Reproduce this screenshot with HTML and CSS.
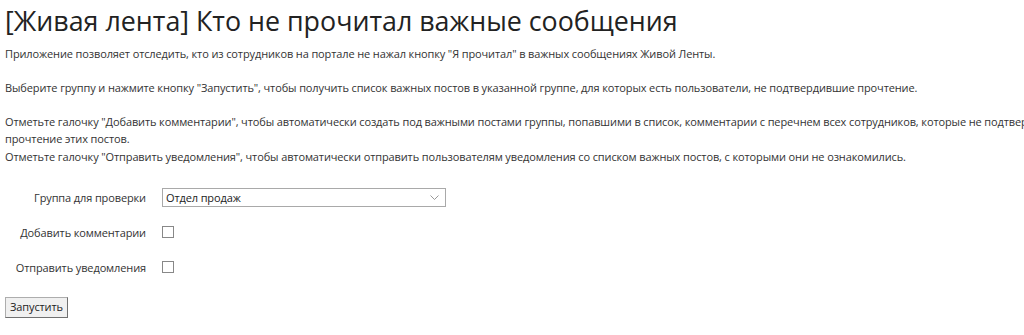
FILE: index.html
```html
<!DOCTYPE html>
<html lang="ru">
<head>
    <meta charset="UTF-8">
    <title>Кто не прочитал важные сообщения</title>
    <link rel="stylesheet" href="styles.css">
</head>
<body>
    <div class="page">
        <h1 class="title">[Живая лента] Кто не прочитал важные сообщения</h1>
        <p class="intro">
            Приложение позволяет отследить, кто из сотрудников на портале не нажал кнопку "Я прочитал" в важных сообщениях Живой Ленты.<br><br>
            Выберите группу и нажмите кнопку "Запустить", чтобы получить список важных постов в указанной группе, для которых есть пользователи, не подтвердившие прочтение.<br><br>
            Отметьте галочку "Добавить комментарии", чтобы автоматически создать под важными постами группы, попавшими в список, комментарии с перечнем всех сотрудников, которые не подтвердили прочтение этих постов.<br>
            Отметьте галочку "Отправить уведомления", чтобы автоматически отправить пользователям уведомления со списком важных постов, с которыми они не ознакомились.
        </p>

        <form class="check-form">
            <div class="form-row">
                <label class="form-label" for="group">Группа для проверки</label>
                <div class="select-box" id="group">
                    <span>Отдел продаж</span>
                    <svg width="9" height="5" viewBox="0 0 9 5"><path d="M0.5 0.5 L4.5 4.5 L8.5 0.5" fill="none" stroke="#999" stroke-width="1"/></svg>
                </div>
            </div>
            <div class="form-row">
                <label class="form-label" for="comments">Добавить комментарии</label>
                <span class="check" id="comments"></span>
            </div>
            <div class="form-row">
                <label class="form-label" for="notify">Отправить уведомления</label>
                <span class="check" id="notify"></span>
            </div>
            <button type="button" class="run-button">Запустить</button>
        </form>
    </div>
</body>
</html>
```

FILE: styles.css
```css
html, body {
    margin: 0;
    padding: 0;
    overflow: hidden;
    background-color: #fff;
}

body {
    font-family: "Open Sans", "Noto Sans", sans-serif;
    color: #333;
}

.page {
    width: 1085px;
    padding: 0 5px;
}

.title {
    font-weight: 400;
    font-size: 26.8px;
    line-height: 38px;
    color: #222;
    margin: 2px 0 0 0;
}

.intro {
    font-size: 11px;
    letter-spacing: -0.12px;
    line-height: 17.1px;
    margin: 5px 0 0 0;
}

.check-form {
    margin-top: 23px;
    font-size: 11px;
    letter-spacing: -0.12px;
}

.form-row {
    display: flex;
    align-items: center;
    height: 19px;
    margin-bottom: 16px;
}

.form-label {
    width: 141px;
    text-align: right;
    padding-right: 16px;
}

.select-box {
    width: 273px;
    height: 17px;
    border: 1px solid #a9a9a9;
    display: flex;
    align-items: center;
    justify-content: space-between;
    padding: 0 6px 0 3px;
    color: #222;
}

.check {
    width: 10px;
    height: 10px;
    border: 1px solid #888;
}

.run-button {
    font-family: "Open Sans", sans-serif;
    font-size: 11px;
    letter-spacing: -0.12px;
    color: #222;
    background-color: #f0f0f0;
    border: 1px solid #adadad;
    border-right-color: #707070;
    border-bottom-color: #707070;
    padding: 0 4px 1px 4px;
    margin-top: 4px;
    height: 21px;
}
```
